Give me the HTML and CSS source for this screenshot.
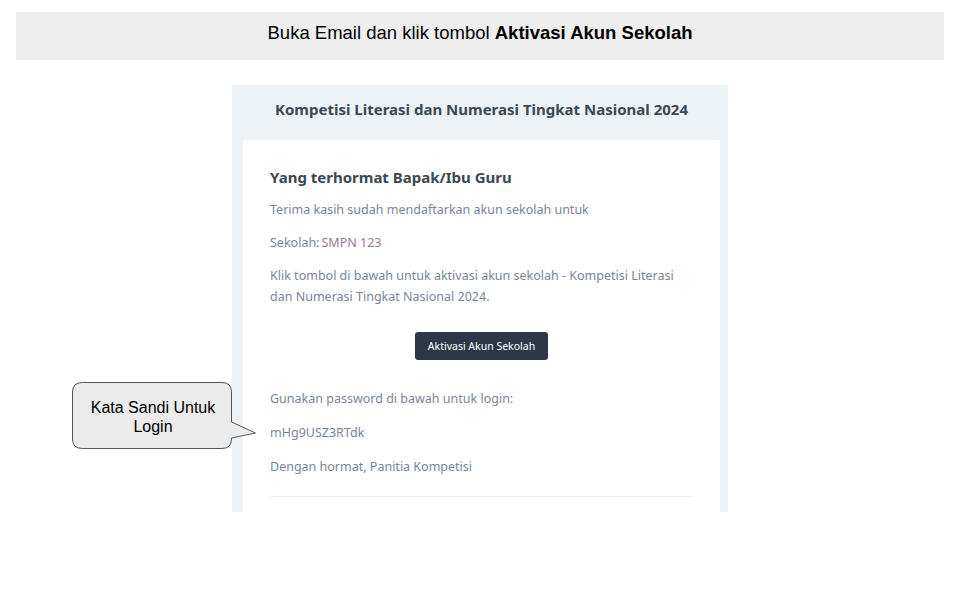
FILE: index.html
```html
<!DOCTYPE html>
<html lang="id">
<head>
  <meta charset="UTF-8" />
  <title>Aktivasi Akun Sekolah</title>
  <link rel="stylesheet" href="styles.css">
</head>
<body>
  <!-- judul langkah -->
  <div class="banner">Buka Email dan klik tombol <b>Aktivasi Akun Sekolah</b></div>

  <div class="stage">
    <!-- isi email -->
    <div class="mail">
      <div class="mail-header">Kompetisi Literasi dan Numerasi Tingkat Nasional 2024</div>
      <div class="mail-card">
        <h2>Yang terhormat Bapak/Ibu Guru</h2>
        <p>Terima kasih sudah mendaftarkan akun sekolah untuk</p>
        <p>Sekolah:<span class="school">SMPN 123</span></p>
        <p>Klik tombol di bawah untuk aktivasi akun sekolah - Kompetisi Literasi dan Numerasi Tingkat Nasional 2024.</p>
        <div class="btn-row">
          <button class="btn">Aktivasi Akun Sekolah</button>
        </div>
        <p class="after-btn">Gunakan password di bawah untuk login:</p>
        <p class="pass">mHg9USZ3RTdk</p>
        <p class="pass">Dengan hormat, Panitia Kompetisi</p>
        <hr>
      </div>
    </div>

    <!-- keterangan -->
    <div class="callout">
      <svg width="190" height="70" viewBox="0 0 190 70">
        <path d="M10.5,0.5 H150 Q159.5,0.5 159.5,10 V40 L183.5,51 L159.5,56 V57 Q159.5,66.5 150,66.5 H10.5 Q0.5,66.5 0.5,57 V10 Q0.5,0.5 10.5,0.5 Z" fill="#ebebeb" stroke="#555" stroke-width="1"/>
      </svg>
      <div class="callout-text">Kata Sandi Untuk<br>Login</div>
    </div>
  </div>
</body>
</html>
```
FILE: styles.css
```css
body {
  margin: 0;
  background: #fff;
  font-family: "Liberation Sans", Arial, sans-serif;
}
.banner {
  margin: 12px 16px 0;
  height: 48px;
  background: #eeeeee;
  text-align: center;
  font-size: 18.5px;
  line-height: 41px;
  color: #000;
}

.stage {
  position: relative;
  width: 496px;
  margin: 25px auto 0;
}

/* email */
.mail {
  height: 427px;
  overflow: hidden;
  background: #edf2f7;
  padding: 0 8px 0 11px;
  font-family: "Noto Sans", "Open Sans", sans-serif;
}
.mail-header {
  padding-top: 14px;
  height: 41px;
  line-height: 20px;
  text-align: center;
  font-size: 15px;
  font-weight: bold;
  color: #3d4852;
}
.mail-card {
  background: #fff;
  padding: 27px 27px 40px;
  border-radius: 2px;
}
.mail-card h2 {
  margin: 0 0 11px;
  font-size: 15px;
  line-height: 21px;
  color: #3d4852;
}
.mail-card p {
  margin: 0 0 12px;
  font-size: 12.5px;
  line-height: 21px;
  color: #7a8599;
}
.school {
  color: #9d7896;
  margin-left: 2px;
}
.btn-row {
  text-align: center;
  margin-top: 25px;
}
.btn {
  width: 133px;
  height: 28px;
  border: none;
  border-radius: 3px;
  background: #2d3748;
  color: #fff;
  font-family: "Noto Sans", sans-serif;
  font-size: 10.5px;
}
.mail-card p.after-btn {
  margin-top: 28px;
}
.mail-card p.pass {
  margin-top: 13px;
}
.mail-card hr {
  border: none;
  border-top: 1px solid #edf2f7;
  margin: 19px 0 0;
}

/* keterangan */
.callout {
  position: absolute;
  left: -160px;
  top: 297px;
  width: 190px;
  height: 70px;
}
.callout svg {
  display: block;
}
.callout-text {
  position: absolute;
  left: 0;
  top: 16px;
  width: 162px;
  text-align: center;
  font-size: 16px;
  line-height: 19px;
  color: #000;
}
```
